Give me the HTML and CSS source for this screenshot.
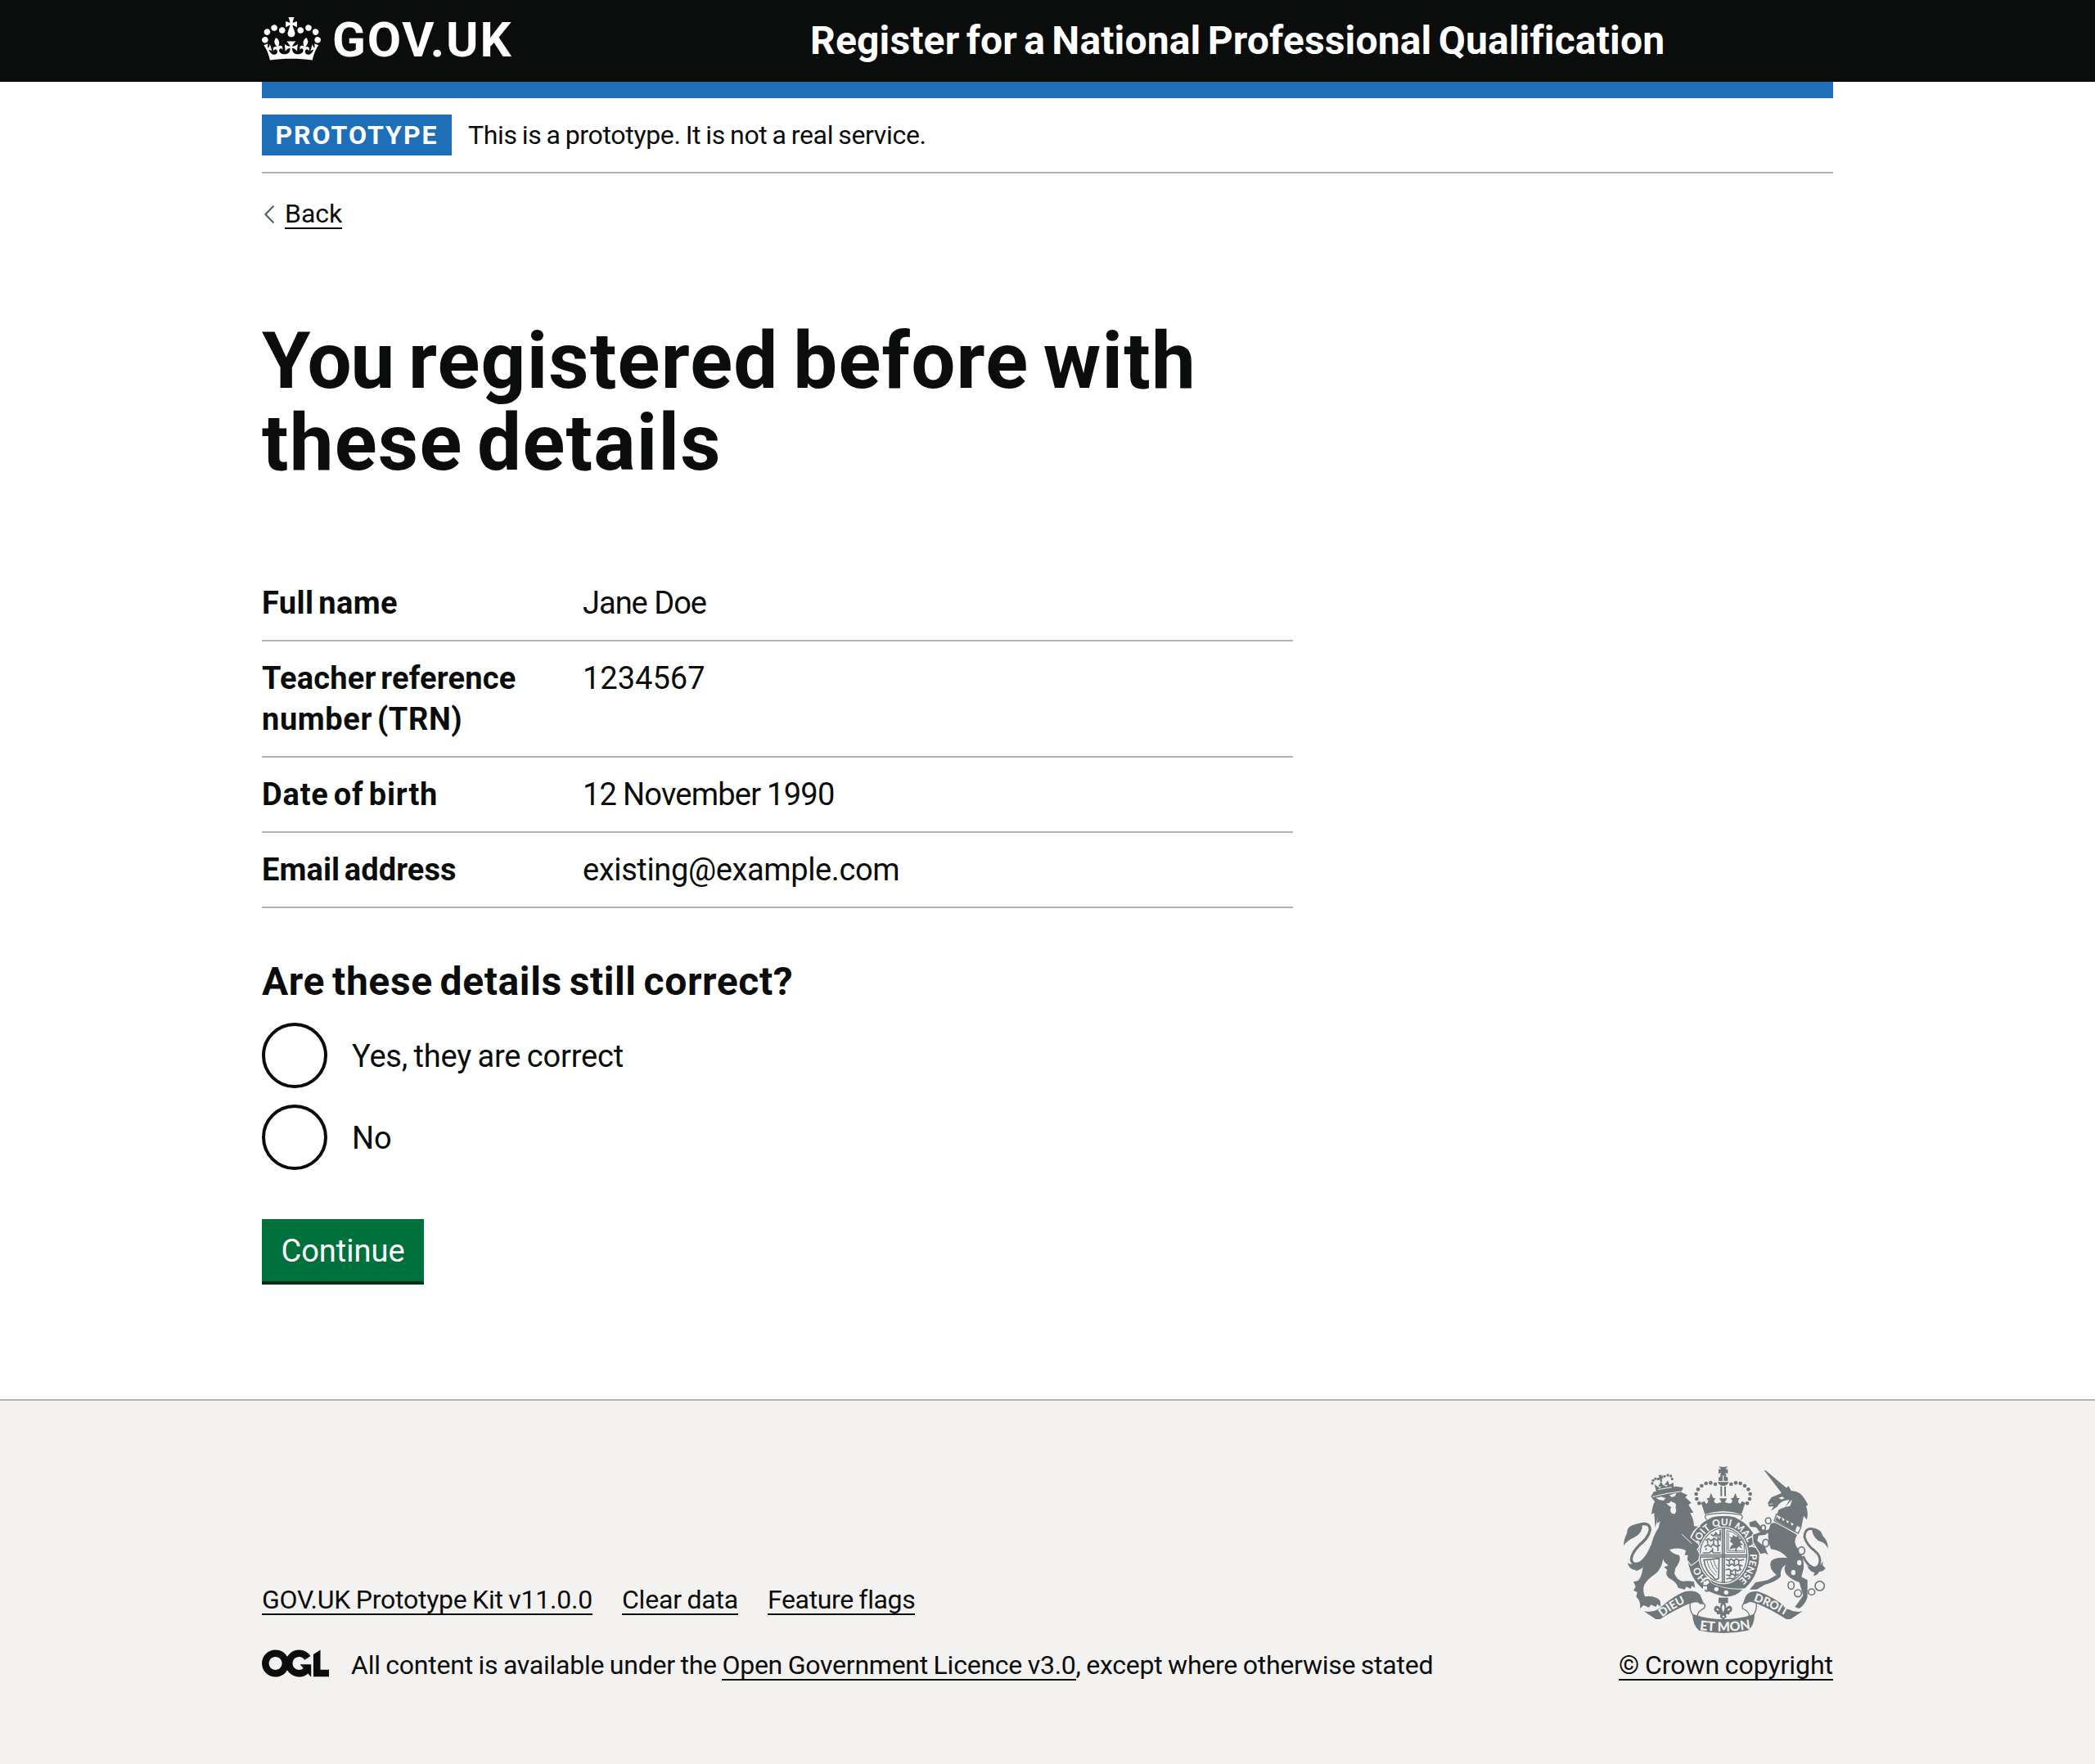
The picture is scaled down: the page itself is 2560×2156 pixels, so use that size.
FILE: index.html
```html
<!DOCTYPE html>
<html lang="en">
<head>
<meta charset="utf-8">
<title>You registered before with these details</title>
<link rel="stylesheet" href="styles.css">
</head>
<body>
<header class="header">
  <div class="container header-inner">
    <a class="logo" href="#">
      <svg class="logo-crown" viewBox="0 0 132 97" aria-hidden="true"><path fill="currentColor" fill-rule="evenodd" d="M25 30.2c3.5 1.5 7.7-.2 9.1-3.7 1.5-3.6-.2-7.8-3.9-9.2-3.6-1.4-7.6.3-9.1 3.9-1.4 3.5.3 7.5 3.9 9zM9 39.5c3.6 1.5 7.8-.2 9.2-3.7 1.5-3.6-.2-7.8-3.9-9.1-3.6-1.5-7.6.2-9.1 3.8-1.4 3.5.3 7.5 3.8 9zM4.4 57.2c3.5 1.5 7.7-.2 9.1-3.8 1.5-3.6-.2-7.7-3.9-9.1-3.5-1.5-7.6.3-9.1 3.8-1.4 3.5.3 7.6 3.9 9.1zm38.3-21.4c3.5 1.5 7.7-.2 9.1-3.8 1.5-3.6-.2-7.7-3.9-9.1-3.6-1.5-7.6.3-9.1 3.8-1.3 3.6.4 7.7 3.9 9.1zm64.4-5.6c-3.6 1.5-7.8-.2-9.1-3.7-1.5-3.6.2-7.8 3.8-9.2 3.6-1.4 7.7.3 9.2 3.9 1.3 3.5-.4 7.5-3.9 9zm15.9 9.3c-3.6 1.5-7.7-.2-9.1-3.7-1.5-3.6.2-7.8 3.7-9.1 3.6-1.5 7.7.2 9.2 3.8 1.5 3.5-.3 7.5-3.8 9zm4.7 17.7c-3.6 1.5-7.8-.2-9.2-3.8-1.5-3.6.2-7.7 3.9-9.1 3.6-1.5 7.7.3 9.2 3.8 1.3 3.5-.4 7.6-3.9 9.1zM89.3 35.8c-3.6 1.5-7.8-.2-9.2-3.8-1.4-3.6.2-7.7 3.9-9.1 3.6-1.5 7.7.3 9.2 3.8 1.4 3.6-.3 7.7-3.9 9.1zM69.7 17.7l8.9 4.7V9.3l-8.9 2.8c-.2-.3-.5-.6-.9-.9L72.4 0H59.6l3.5 11.2c-.3.3-.6.5-.9.9l-8.8-2.8v13.1l8.8-4.7c.3.3.6.7.9.9l-5 15.4v.1c-.2.8-.4 1.6-.4 2.4 0 4.1 3.1 7.5 7 8.1h.2c.3 0 .7.1 1 .1.4 0 .7 0 1-.1h.2c4-.6 7.1-4.1 7.1-8.1 0-.8-.1-1.7-.4-2.4V34l-5.1-15.4c.4-.2.7-.6 1-.9zM66 92.8c16.9 0 32.8 1.1 47.1 3.2 4-16.9 8.9-26.7 14-33.5l-9.6-3.4c1 4.9 1.1 7.2 0 10.2-1.5-1.4-3-4.3-4.2-8.7L108.6 76c2.8-2 5-3.2 7.5-3.3-4.4 9.4-10 11.9-13.6 11.2-4.3-.8-6.3-4.6-5.6-7.9 1-4.7 5.7-5.9 8-.5 4.3-8.7-3-11.4-7.6-8.8 7.1-7.2 7.9-13.5 2.1-21.1-8 6.1-8.1 12.3-4.5 20.8-4.7-5.4-12.1-2.5-9.5 6.2 3.4-5.2 7.9-2 7.2 3.1-.6 4.3-6.4 7.8-13.5 7.2-10.3-.9-10.9-8-11.2-13.8 2.5-.5 7.1 1.8 11 7.3L80.2 60c-4.1 4.4-8 5.3-12.3 5.4 1.4-4.4 8-11.6 8-11.6H55.5s6.4 7.2 7.9 11.6c-4.2-.1-8-1-12.3-5.4l1.4 16.4c3.9-5.5 8.5-7.7 10.9-7.3-.3 5.8-.9 12.8-11.1 13.8-7.2.6-12.9-2.9-13.5-7.2-.7-5 3.8-8.3 7.1-3.1 2.7-8.7-4.6-11.6-9.4-6.2 3.7-8.5 3.6-14.7-4.6-20.8-5.8 7.6-5 13.9 2.2 21.1-4.7-2.6-11.9.1-7.7 8.8 2.3-5.5 7.1-4.2 8.1.5.7 3.3-1.3 7.1-5.7 7.9-3.5.7-9-1.8-13.5-11.2 2.5.1 4.7 1.3 7.5 3.3l-4.7-15.4c-1.2 4.4-2.7 7.2-4.3 8.7-1.1-3-.9-5.3 0-10.2l-9.5 3.4c5 6.9 9.9 16.7 14 33.5 14.8-2.1 30.8-3.2 47.7-3.2z"/></svg>
      <span class="logo-text">GOV.UK</span>
    </a>
    <a class="service-name" href="#">Register for a National Professional Qualification</a>
  </div>
</header>

<div class="container">
  <div class="phase-banner">
    <strong class="tag">PROTOTYPE</strong>
    <span class="phase-text">This is a prototype. It is not a real service.</span>
  </div>
  <a class="back-link" href="#">
    <svg class="back-chevron" viewBox="0 0 12 22" aria-hidden="true"><path d="M11.3 .7 1.4 11l9.9 10.3" fill="none" stroke="#505a5f" stroke-width="2"/></svg>
    <span class="back-text">Back</span>
  </a>

  <main class="main">
    <h1 class="title"><span class="title-lead">You</span> registered before with<br>these details</h1>

    <dl class="summary">
      <div class="summary-row"><dt>Full name</dt><dd class="v-name">Jane Doe</dd></div>
      <div class="summary-row"><dt class="k-trn">Teacher reference <span class="k-number">number (TRN)</span></dt><dd>1234567</dd></div>
      <div class="summary-row"><dt class="k-dob">Date of birth</dt><dd class="v-dob">12 November 1990</dd></div>
      <div class="summary-row"><dt class="k-email">Email address</dt><dd class="v-email">existing@example.com</dd></div>
    </dl>

    <form class="form">
      <h2 class="question">Are these details still correct?</h2>
      <div class="radios">
        <label class="radio"><input type="radio" name="correct"><span class="radio-text">Yes, they are correct</span></label>
        <label class="radio"><input type="radio" name="correct"><span class="radio-text">No</span></label>
      </div>
      <button class="button" type="button">Continue</button>
    </form>
  </main>
</div>

<footer class="footer">
  <div class="container footer-inner">
    <div class="footer-meta">
      <nav class="footer-links">
        <a href="#">GOV.UK Prototype Kit v11.0.0</a>
        <a class="f-clear" href="#">Clear data</a>
        <a class="f-flags" href="#">Feature flags</a>
      </nav>
      <div class="licence">
        <svg class="ogl" viewBox="0 0 483.2 195.7" aria-label="Open Government Licence"><path fill="currentColor" d="M421.5 142.8V.1l-50.7 32.3v161.1h112.4v-50.7zm-122.3-9.6A47.12 47.12 0 0 1 221 97.8c0-26 21.1-47.1 47.1-47.1 16.7 0 31.4 8.7 39.7 21.8l42.7-27.2A97.63 97.63 0 0 0 268.1 0c-36.5 0-68.3 20.1-85.1 49.7A98 98 0 0 0 97.8 0C43.9 0 0 43.9 0 97.8s43.9 97.8 97.8 97.8c36.5 0 68.3-20.1 85.1-49.7a97.76 97.76 0 0 0 149.6 25.4l19.4 22.2h3v-87.8h-80l24.3 27.5zM97.8 145c-26 0-47.1-21.1-47.1-47.1s21.1-47.1 47.1-47.1 47.1 21.1 47.1 47.1S123.8 145 97.8 145"/></svg>
        <span class="licence-text">All content is available under the <a href="#">Open Government Licence v3.0</a>, except where otherwise stated</span>
      </div>
    </div>
    <div class="copyright">
      <svg class="crest" viewBox="72 66 750 612" aria-hidden="true">
        <defs>
          <path id="garter" d="M438 503A97 110 0 1 1 438.1 503"/>
          <path id="dieu" d="M214 620Q262 578 326 557"/>
          <path id="etmon" d="M350 666Q437 678 528 664"/>
          <path id="droit" d="M548 560Q606 578 674 620"/>
        </defs>

        <!-- garter and shield -->
        <g class="grey">
          <ellipse cx="438" cy="395" rx="131" ry="148"/>
          <ellipse class="paper" cx="438" cy="393" rx="92" ry="106"/>
          <ellipse class="line" cx="438" cy="393" rx="86" ry="100" stroke-width="4"/>
          <path class="line" stroke-width="5" d="M434 292V494M441 292V494M352 392H525M352 399H525"/>
          <path class="line" stroke-width="5" d="M362 384h24l8-8 8 8h26M368 362l14-8 10 8 8-10 12 8 14-4M372 338l12-6 8 8 12-10 10 8 14-8M392 316l10 6 8-12 8 10 12-6M380 350v-12M402 352v-22M418 378v-60M374 374v-8M398 378v-12M410 308v18M426 300v40"/>
          <path class="line" stroke-width="3" d="M450 302V382H516M450 302Q490 308 514 350V382M456 308V376H510"/>
          <path d="M460 372l6-14 8-6-12-10 4-10-8-8 12 4 4-10 10 8 8-6 4 12 10 4-8 8 12 10-10 2 8 14-14-10-8 10 2 10-8-2 2-12-12 2z"/>
          <path class="line" stroke-width="5" d="M364 410Q392 408 422 404L420 478Q406 486 402 474Q372 450 366 410"/>
          <path class="line" stroke-width="3" d="M378 412Q384 446 410 466M390 412Q396 440 414 456M402 410Q406 430 416 444"/>
          <path class="line" stroke-width="5" d="M446 408l12 4 8-6 10 8 8-8 12 6 18-4M448 426l10 6 12-8 8 8 14-6 16 6M446 446l14-2 8 8 12-8 10 6 14-6M448 464l12 4 10-8 10 8 14-6M448 480l14-4 10 4 8-6M460 408v20M478 408v26M494 412v20M464 446v24M482 446v28M498 430v18"/>
        </g>
        <g class="motto ring">
          <text><textPath href="#garter" startOffset="66">HO</textPath></text>
          <text><textPath href="#garter" startOffset="197">SOIT</textPath></text>
          <text><textPath href="#garter" startOffset="287">QUI</textPath></text>
          <text><textPath href="#garter" startOffset="364">MAL</textPath></text>
          <text><textPath href="#garter" startOffset="444">Y</textPath></text>
          <text><textPath href="#garter" startOffset="482">PENSE</textPath></text>
        </g>
        <g class="grey">
          <path class="paper" d="M366 476L384 470 396 494Q450 520 520 514L500 550Q430 556 362 524Z"/>
          <path d="M386 492Q440 520 508 518Q480 548 440 544Q404 536 376 520Z"/>
          <path class="line" stroke-width="5" d="M368 488q12-12 18-2l6 10q-16 2-12 14l8 10q-14 10-18-2M362 504h18"/>
          <circle class="paper" cx="412" cy="517" r="8"/><circle class="paper" cx="448" cy="529" r="8"/>
        </g>

        <!-- royal crown -->
        <g class="grey">
          <path class="paper" d="M350 190Q437 140 522 190L512 256Q437 240 362 258Z"/>
          <path d="M421 66q16 6 32 0l-8 13 9-3v18l-9-4 4 12h-24l4-12-9 4V76l9 3z"/>
          <path d="M420 120V108Q437 94 454 108V120ZM416 124H458Q452 138 437 138 422 138 416 124Z"/>
          <path class="paper" d="M435 100h4v20h-4z"/>
          <path class="line" stroke-width="6" d="M430 140V176M444 140V176"/>
          <g>
            <circle cx="408" cy="132" r="7"/><circle cx="391" cy="127" r="7"/><circle cx="374" cy="129" r="7"/><circle cx="358" cy="138" r="7"/><circle cx="345" cy="151" r="7"/><circle cx="338" cy="168" r="7"/><circle cx="340" cy="186" r="7"/><circle cx="349" cy="202" r="7"/>
            <circle cx="466" cy="132" r="7"/><circle cx="483" cy="127" r="7"/><circle cx="500" cy="129" r="7"/><circle cx="516" cy="138" r="7"/><circle cx="529" cy="151" r="7"/><circle cx="536" cy="168" r="7"/><circle cx="534" cy="186" r="7"/><circle cx="525" cy="202" r="7"/>
          </g>
          <path d="M356 200l12-6 6 10q8-2 8-12l-6-8 10-2 6-18 8 18 9 2-6 10q4 10 14 8l14-4-8-14h28l-8 14 14 4q10 2 14-8l-6-10 9-2 8-18 6 18 10 2-6 8q0 10 8 12l6-10 12 6-14 42Q437 220 370 242Z"/>
          <path class="line" stroke-width="4" d="M376 262Q364 246 378 244 437 232 500 244 514 248 502 262"/>
        </g>

        <!-- lion -->
        <g class="grey">
          <path class="outline" d="M172 178L182 160Q228 152 262 140L290 144 284 162 306 172 298 180 320 200 310 208 328 236 316 238Q330 262 330 286L345 288Q325 300 316 328L345 352Q352 364 340 370L350 390 345 410 320 428 305 408 308 392 296 392 300 376Q280 362 240 372 250 388 275 392 286 410 262 440L258 460Q270 488 290 488 310 484 330 490L334 512 322 505 318 516 302 508 296 518 272 512Q266 490 240 478 222 462 232 446L220 436 236 430Q216 415 217 405 212 440 190 460 160 480 148 500 140 520 150 544 190 540 206 560L208 582 196 572 190 582 172 574 165 584 145 576 132 588Q136 560 118 545L122 528 108 522 116 508 108 490 124 486Q138 475 142 440 150 400 170 368 180 320 200 292L206 268 194 276 198 250 188 292 184 238 174 242Q178 210 186 196Z"/>
          <path class="paper" d="M190 182l20-4 16 6-8 8-14-2zM240 172l26-8-6 12-12 4z"/>
          <path class="paper" d="M228 200q12 6 16-6l14 6q10 6 4 16 6 16-2 24-12 4-16-8-2-8 2-16-10-4-18-16z"/>
          <path class="line paper-line" stroke-width="3" d="M178 178Q230 164 286 158M286 316L322 350"/>
          <path d="M192 160L184 132 198 142 208 124 220 138 234 118 240 134 254 126 256 146Z"/>
          <path class="paper" d="M198 150l50-8 1 3-50 8zM196 140l8 6 6-6zM222 136l6 6 6-8z"/>
          <circle cx="177" cy="129" r="5"/><circle cx="180" cy="118" r="5"/><circle cx="189" cy="112" r="5"/><circle cx="199" cy="113" r="5"/><circle cx="222" cy="103" r="5"/><circle cx="234" cy="99" r="5"/><circle cx="245" cy="102" r="5"/><circle cx="250" cy="113" r="5"/>
          <path d="M199 98l6 2 2-5 4 6 7-1-4 6 5 5-7 1 1 12-6 1-2-12-7-2 5-5z"/>
          <path class="line" stroke-width="10" d="M130 280Q168 270 169 300 162 330 130 355 100 385 100 410 108 434 136 418 160 400 176 358"/>
          <path d="M140 278Q144 310 110 328 86 338 72 357 72 336 84 312 84 286 112 280 124 274 140 278ZM86 420q14 10 34 2 20 4 32-18l2 14q-8 24-34 32l-8-4q-18 0-26-26z"/>
        </g>

        <!-- unicorn -->
        <g class="grey">
          <path d="M587 81L593 82 674 150 652 166Z"/>
          <path d="M644 168Q664 156 676 138L686 156Q720 156 738 190L748 208 741 212Q750 238 744 262L732 248 724 288Q690 276 634 244L640 226 664 216 680 190Q650 190 634 215L612 230 622 214 604 214 601 200 614 180Z"/>
          <path class="paper" d="M640 182l14-4 8 6-12 4zM604 206l14-4-2 4zM664 216l22-24 4-2-8 22z"/>
          <path class="outline" d="M628 274Q670 295 708 318 690 345 712 370 735 400 732 440L724 472 746 484V545Q738 575 714 588L700 582 716 560 730 540 716 492Q690 485 668 462 655 440 668 426 644 440 648 470 630 490 590 500L560 518H534L556 492 600 484 632 465Q602 440 612 415 625 398 672 402 650 375 612 370 600 340 602 310L590 318 566 320 562 340 590 362 602 392 590 384 574 388 548 345 546 318 580 305 604 298 612 275Z"/>
          <path d="M532 272L556 265 572 284 590 290 592 304 572 308 558 290 536 288Z"/>
          <path class="paper" stroke="currentColor" stroke-width="4" d="M632 242L722 290 712 312 624 266Z"/>
          <path d="M628 264l6-14 8 12 8-10 6 16 10-10 6 18 10-10 6 18 12-8 8 8-8 22Z"/>
          <g class="line" stroke-width="5">
            <ellipse cx="602" cy="266" rx="10" ry="11"/><ellipse class="paper" cx="584" cy="292" rx="8" ry="10"/><ellipse class="paper" cx="593" cy="348" rx="11" ry="14"/><ellipse class="paper" cx="724" cy="376" rx="12" ry="14"/><ellipse cx="686" cy="503" rx="11" ry="14"/><ellipse cx="711" cy="532" rx="13" ry="13"/><ellipse class="paper" cx="761" cy="527" rx="12" ry="11"/><circle cx="791" cy="505" r="17"/>
          </g>
          <ellipse class="paper" cx="716" cy="420" rx="8" ry="10"/><ellipse class="paper" cx="694" cy="456" rx="8" ry="10"/>
          <path class="line" stroke-width="9" d="M778 300Q736 284 735 326 744 356 772 376 798 396 790 424 780 446 760 434 742 424 730 396"/>
          <path d="M762 296Q796 292 802 322 822 340 821 368 812 346 786 340 764 322 762 296ZM744 430q14 12 30 6 20 0 28-22l0 16 10 10q-10 14-22 12-8 14-22 16l4-12q-18-2-28-26z"/>
        </g>

        <!-- scroll -->
        <g class="grey">
          <path d="M146 598Q180 604 206 586 250 544 296 526 346 516 356 546L370 580 340 560 322 566Q262 590 206 627H190Z"/>
          <path d="M728 598Q700 604 676 590 620 544 566 526 530 520 518 546L506 580 534 560 552 566Q612 590 668 627H684Z"/>
          <path class="paper" stroke="currentColor" stroke-width="4" d="M316 568Q340 556 354 570 376 566 368 586 340 600 344 616L326 612Q312 590 316 568ZM558 568Q534 556 522 568 502 570 508 588 534 600 532 616L548 612Q562 590 558 568Z"/>
          <path d="M324 608Q437 646 552 608 552 650 528 668 437 688 348 668 326 650 324 608Z"/>
          <path d="M420 548h35v20h-35z"/>
          <path d="M437 560q14 14 10 26 14-16 22-2 4 14-8 18l-2 8-12-2 2 12-12 8-12-8 2-12-12 2-2-8q-14-6-8-18 8-14 22 2-4-14 10-26z"/>
          <path class="paper" d="M437 572q8 10 3 22l-3 10-3-10q-5-12 3-22zM434 614h7v6h-7zM412 588q8-2 10 8l-8-2zM462 588q-8-2-10 8l8-2z"/>
        </g>
        <g class="motto">
          <text><textPath href="#dieu">DIEU</textPath></text>
          <text class="et-mon"><textPath href="#etmon">ET MON</textPath></text>
          <text><textPath href="#droit">DROIT</textPath></text>
        </g>
      </svg>
      <a href="#">© Crown copyright</a>
    </div>
  </div>
</footer>
</body>
</html>
```
FILE: styles.css
```css
* { box-sizing: border-box; }
body { margin: 0; background: #fff; color: #0b0c0c; font-family: Roboto, "Noto Sans", sans-serif; font-size: 38px; line-height: 50px; }
a { color: inherit; text-decoration: none; }
.container { width: 1920px; margin: 0 auto; }
.header { height: 100px; margin-bottom: 20px; background: #0b0c0c; color: #fff; }
.header-inner { height: 120px; border-bottom: 20px solid #1d70b8; display: grid; grid-template-columns: 670px 1fr; }
.logo { display: flex; align-items: flex-start; gap: 14px; }
.logo-crown { width: 72px; height: 53px; margin-top: 21px; }
.logo-text { font-size: 60px; line-height: 60px; font-weight: 700; margin-top: 19px; letter-spacing: 1.8px; }
.service-name { font-size: 48px; line-height: 60px; font-weight: 700; margin-top: 20px; white-space: nowrap; letter-spacing: .15px; word-spacing: -3.8px; }
.phase-banner { height: 92px; padding: 20px 0; border-bottom: 2px solid #b1b4b6; display: flex; align-items: flex-start; gap: 20px; font-size: 32px; line-height: 40px; }
.tag { width: 232px; height: 50px; line-height: 50px; background: #1d70b8; color: #fff; text-align: center; font-weight: 700; letter-spacing: 2px; }
.phase-text { margin-top: 5px; letter-spacing: -.33px; word-spacing: -1.5px; }
.back-link { display: flex; width: max-content; margin-top: 29px; font-size: 32px; line-height: 40px; }
.back-chevron { width: 12px; height: 22px; margin: 10px 13px 0 3px; }
.back-text { height: 39px; border-bottom: 2px solid #0b0c0c; }
.main { width: 1260px; padding-top: 111px; }
.title { margin: 0; font-size: 96px; line-height: 100px; font-weight: 700; white-space: nowrap; letter-spacing: 1.25px; word-spacing: -7.5px; }
.title-lead { letter-spacing: -1px; }
.summary { margin: 101px 0 60px; }
.summary-row { display: grid; grid-template-columns: 392px 1fr; padding: 20px 0; border-bottom: 2px solid #b1b4b6; }
.summary dt { font-weight: 700; padding-right: 40px; letter-spacing: .4px; word-spacing: -4px; }
.summary .k-trn { letter-spacing: .2px; }
.summary .k-number { letter-spacing: .6px; }
.summary .k-dob { letter-spacing: .8px; }
.summary .k-email { letter-spacing: .1px; }
.summary dd { margin: 0; }
.v-name { letter-spacing: -1px; }
.v-dob { letter-spacing: -.75px; word-spacing: -1px; }
.v-email { letter-spacing: -.37px; }
.question { margin: 0 0 20px; font-size: 48px; line-height: 60px; font-weight: 700; letter-spacing: .6px; word-spacing: -3.6px; }
.radios { display: flex; flex-direction: column; gap: 20px; }
.radio { display: flex; align-items: center; gap: 30px; height: 80px; }
.radio input { appearance: none; width: 80px; height: 80px; margin: 0; border: 4px solid #0b0c0c; border-radius: 50%; }
.radio-text { padding-top: 2px; letter-spacing: -.2px; word-spacing: -1.7px; }
.button { display: block; width: 198px; height: 76px; margin-top: 60px; padding: 0; border: 0; background: #00703c; color: #fff; box-shadow: 0 4px 0 #002d18; font: inherit; line-height: 78px; }
.footer { margin-top: 144px; height: 446px; border-top: 2px solid #b1b4b6; background: #f3f2f1; font-size: 32px; line-height: 40px; letter-spacing: -.24px; word-spacing: -1.1px; }
.footer a { height: 39px; border-bottom: 2px solid #0b0c0c; }
.footer-inner { display: flex; justify-content: space-between; padding-top: 80px; }
.footer-meta { padding-top: 143px; }
.footer-links { display: flex; gap: 36px; }
.f-clear { letter-spacing: -.2px; }
.f-flags { letter-spacing: -.35px; }
.licence { display: flex; align-items: flex-start; margin-top: 41px; gap: 27px; white-space: nowrap; }
.ogl { width: 82px; height: 34px; margin-top: 1px; }
.licence-text a { display: inline-block; }
.copyright { display: flex; flex-direction: column; align-items: center; gap: 19px; letter-spacing: -.05px; }
.crest { width: 250px; height: 204px; color: #6f777b; }
.grey { fill: currentColor; }
.paper { fill: #f3f2f1; }
.line { fill: none; stroke: currentColor; }
.paper-line { stroke: #f3f2f1; }
.outline { stroke: #f3f2f1; stroke-width: 7px; paint-order: stroke; }
.motto { fill: #f3f2f1; font-family: Lato, sans-serif; font-weight: 900; font-size: 42px; letter-spacing: 0; word-spacing: 0; }
.ring { font-size: 35px; }
.et-mon { font-size: 48px; }
```
